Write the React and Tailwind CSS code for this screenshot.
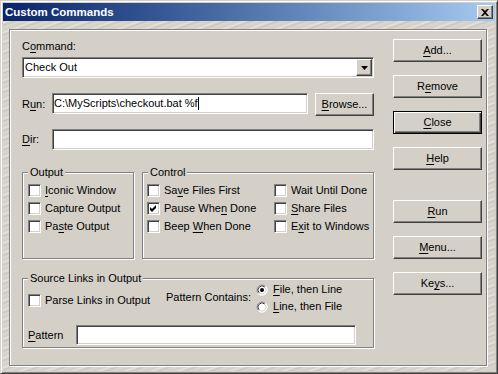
import React from 'react';

const SUNKEN =
  'bg-white border border-t-[#808080] border-l-[#808080] border-b-white border-r-white shadow-[inset_1px_1px_0_#404040,inset_-1px_-1px_0_#d4d0c8]';
const RAISED =
  'bg-[#d4d0c8] border border-t-white border-l-white border-r-[#404040] border-b-[#404040] shadow-[inset_-1px_-1px_0_#808080]';
const ETCHED = 'border border-[#808080] shadow-[inset_1px_1px_0_#fff,1px_1px_0_#fff]';

// "&" marks the access key, like a Windows resource string
function Acc({ t }) {
  const i = t.indexOf('&');
  if (i < 0) return t;
  return (
    <>
      {t.slice(0, i)}
      <span className="underline underline-offset-[2px] decoration-1">{t[i + 1]}</span>
      {t.slice(i + 2)}
    </>
  );
}

function Check({ label, checked, className = '' }) {
  return (
    <div className={`flex items-center h-[13px] ${className}`}>
      <span className={`w-[13px] h-[13px] shrink-0 flex items-center justify-center ${SUNKEN}`}>
        {checked && (
          <svg width="7" height="7" viewBox="0 0 7 7">
            <polygon points="0,2 2,4 6,0 6,3 2,7 0,5" fill="#000" />
          </svg>
        )}
      </span>
      <span className="ml-[4px] whitespace-nowrap">
        <Acc t={label} />
      </span>
    </div>
  );
}

function Radio({ label, selected }) {
  return (
    <div className="flex items-center h-[13px]">
      <svg width="12" height="12" viewBox="0 0 12 12" className="shrink-0">
        <circle cx="6" cy="6" r="5.5" fill="#fff" />
        <path d="M9.54 2.46 A5 5 0 0 0 2.46 9.54" stroke="#808080" fill="none" />
        <path d="M2.46 9.54 A5 5 0 0 0 9.54 2.46" stroke="#fff" fill="none" />
        <path d="M8.83 3.17 A4 4 0 0 0 3.17 8.83" stroke="#404040" fill="none" />
        <path d="M3.17 8.83 A4 4 0 0 0 8.83 3.17" stroke="#d4d0c8" fill="none" />
        {selected && <circle cx="6" cy="6" r="2" fill="#000" />}
      </svg>
      <span className="ml-[5px] whitespace-nowrap">
        <Acc t={label} />
      </span>
    </div>
  );
}

function Button({ label, isDefault, className = '' }) {
  const frame = isDefault
    ? 'bg-[#d4d0c8] border border-black shadow-[inset_1px_1px_0_#fff,inset_-1px_-1px_0_#404040,inset_-2px_-2px_0_#808080]'
    : RAISED;
  return (
    <div className={`h-[23px] flex items-center justify-center ${frame} ${className}`}>
      <Acc t={label} />
    </div>
  );
}

function Group({ title, className = '', children }) {
  return (
    <div className={`relative ${ETCHED} ${className}`}>
      <span className="absolute -top-[7px] left-[5px] px-[2px] bg-[#d4d0c8] leading-[13px]">{title}</span>
      {children}
    </div>
  );
}

export default function App() {
  return (
    <div className="w-[498px] h-[374px] flex flex-col p-[2px] border border-t-[#d4d0c8] border-l-[#d4d0c8] border-r-[#404040] border-b-[#404040] shadow-[inset_1px_1px_0_#fff,inset_-1px_-1px_0_#808080] bg-[#d4d0c8] text-[11px] leading-[13px] text-black font-['Liberation_Sans',Arial,sans-serif] overflow-hidden">
      {/* title bar */}
      <div className="h-[18px] shrink-0 flex items-center justify-between pl-[2px] pr-[2px] bg-gradient-to-r from-[#0a246a] to-[#a6caf0]">
        <span className="text-white font-bold text-[11.5px]">Custom Commands</span>
        <div className={`w-[16px] h-[14px] flex items-center justify-center ${RAISED}`}>
          <svg width="8" height="7" viewBox="0 0 8 7">
            <path d="M0 0 L2 0 L4 2 L6 0 L8 0 L5 3.5 L8 7 L6 7 L4 5 L2 7 L0 7 L3 3.5 Z" fill="#000" />
          </svg>
        </div>
      </div>

      {/* textured frame */}
      <div className="flex-1 pt-[8px] pl-[6px] pr-[8px] pb-[5px] bg-[#d4d0c8] bg-[image:repeating-linear-gradient(160deg,#d4d0c8_0px,#e4e2dc_2px,#cbc7bf_4px,#dad7d0_6px,#d4d0c8_9px)]">
        <div className={`h-full flex pl-[12px] bg-[#d4d0c8] ${ETCHED}`}>
          {/* left column */}
          <div className="w-[352px] flex flex-col pt-[10px]">
            <div>
              <Acc t="C&ommand:" />
            </div>
            <div className={`mt-[4px] h-[21px] flex items-center justify-between ${SUNKEN}`}>
              <span className="pl-[2px]">Check Out</span>
              <div className={`w-[16px] h-[17px] flex items-center justify-center mr-[1px] ${RAISED}`}>
                <svg width="7" height="4" viewBox="0 0 7 4">
                  <path d="M0 0 H7 L3.5 4 Z" fill="#000" />
                </svg>
              </div>
            </div>

            <div className="mt-[15px] h-[23px] flex items-center">
              <span className="w-[30px]">
                <Acc t="R&un:" />
              </span>
              <div className={`self-start w-[256px] h-[21px] flex items-center pl-[1px] ${SUNKEN}`}>
                <span>C:\MyScripts\checkout.bat %f</span>
                <span className="w-[1px] h-[13px] bg-black" />
              </div>
              <Button label="&Browse..." className="ml-[7px] w-[59px]" />
            </div>

            <div className="mt-[13px] h-[21px] flex items-center">
              <span className="w-[30px]">
                <Acc t="&Dir:" />
              </span>
              <div className={`w-[322px] h-[21px] ${SUNKEN}`} />
            </div>

            <div className="mt-[22px] flex gap-[8px]">
              <Group title="Output" className="w-[112px] h-[87px]">
                <div className="flex flex-col gap-[5px] pt-[11px] pl-[5px]">
                  <Check label="&Iconic Window" />
                  <Check label="Capture Output" />
                  <Check label="Pa&ste Output" />
                </div>
              </Group>
              <Group title="Control" className="w-[232px] h-[87px]">
                <div className="grid grid-cols-[127px_1fr] gap-y-[5px] pt-[11px] pl-[4px]">
                  <Check label="Sa&ve Files First" />
                  <Check label="Wait Until Done" />
                  <Check label="Pause Whe&n Done" checked />
                  <Check label="&Share Files" />
                  <Check label="Beep &When Done" />
                  <Check label="E&xit to Windows" />
                </div>
              </Group>
            </div>

            <Group title="Source Links in Output" className="mt-[19px] h-[70px]">
              <div className="flex items-start pt-[4px] pl-[5px]">
                <Check label="Parse Links in Output" className="mt-[11px] w-[138px]" />
                <span className="mt-[8px] w-[90px] whitespace-nowrap">Pattern Contains:</span>
                <div className="flex flex-col gap-[4px]">
                  <Radio label="&File, then Line" selected />
                  <Radio label="&Line, then File" />
                </div>
              </div>
              <div className="mt-[12px] flex items-center pl-[5px]">
                <span className="w-[48px]">
                  <Acc t="&Pattern" />
                </span>
                <div className={`w-[280px] h-[20px] ${SUNKEN}`} />
              </div>
            </Group>
          </div>

          {/* right column */}
          <div className="ml-[19px] w-[89px] flex flex-col pt-[9px]">
            <Button label="&Add..." />
            <Button label="R&emove" className="mt-[13px]" />
            <Button label="&Close" isDefault className="mt-[13px]" />
            <Button label="&Help" className="mt-[13px]" />
            <Button label="&Run" className="mt-[30px]" />
            <Button label="&Menu..." className="mt-[13px]" />
            <Button label="Ke&ys..." className="mt-[13px]" />
          </div>
        </div>
      </div>
    </div>
  );
}
